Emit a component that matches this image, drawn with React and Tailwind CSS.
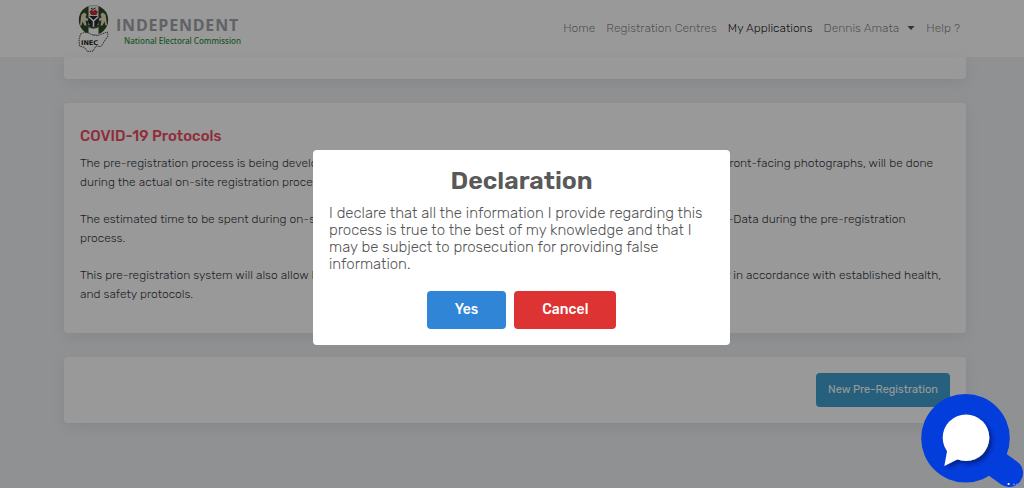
import React from "react";

function CoatOfArms() {
  return (
    <svg viewBox="0 0 32 48" className="h-12 w-8 shrink-0" aria-hidden="true">
      <circle cx="15.5" cy="15" r="14.7" fill="#2f4a22" />
      <path d="M10.5 1.2 Q15.5 -.6 20.5 1.2 V20 H10.5Z" fill="#e9e9e4" />
      <path d="M11.5 7 l2-2.5 2 1.5 2-1.5 2.5 2.5 -1.8 3 h-5z" fill="#c52a3c" />
      <path d="M13 3.2 l2 1.2 2.6-1.4" stroke="#333" strokeWidth="1" fill="none" />
      <path d="M10 11 h11 v5 q-1 5 -5.5 7 q-4.500-2 -5.500-7z" fill="#25292a" />
      <path d="M10.500 11.500 L15.500 16 L20.500 11.500 M15.500 16 V22" stroke="#fff" strokeWidth="1.600" fill="none" />
      <path d="M3.500 9.500 l3-2 2 2 -1 3 3 1.500 -1 2 -2-.5 1 5 h-2 l-2-4 -1 4 h-1.500 l1-8z" fill="#e6dcc6" />
      <path d="M27.500 9.500 l-3-2 -2 2 1 3 -3 1.500 1 2 2-.5 -1 5 h2 l2-4 1 4 h1.500 l-1-8z" fill="#e6dcc6" />
      <path d="M10.500 21.500 Q15.500 24 20.500 21.500 V29.500 H10.500Z" fill="#fff" />
      <path d="M9 20.500 Q15.500 25 22 20.500" stroke="#3e6133" strokeWidth="2" fill="none" />
      <path d="M2.500 29 Q8 26 12.500 29 Q18 32 22 29.500 L29.500 27 L30 31 L26.500 36 L23 41.500 L18 41 L15 46 L9.500 46.500 L6.500 42.500 L1.500 41 L1 35z" fill="#fff" stroke="#4c5348" strokeWidth="1" strokeDasharray="1.600 .7" strokeLinejoin="round" />
      <text x="3" y="39.500" fontSize="6.500" fontWeight="700" fontFamily="DejaVu Sans, sans-serif" fill="#222d20">INEC</text>
    </svg>
  );
}

function NavLink({ children, active }) {
  return (
    <a
      href="#"
      aria-current={active ? "page" : undefined}
      className={active ? "text-black/90" : "text-black/50"}
    >
      {children}
    </a>
  );
}

function Header() {
  return (
    <header className="bg-white">
      <div className="flex h-[57px] items-center justify-between pl-[78px] pr-16">
        <a href="#" className="flex items-center gap-1.5">
          <CoatOfArms />
          <span className="flex flex-col pt-1">
            <span className="font-['Open_Sans'] text-[16px] font-bold leading-5 tracking-wider text-[#a1a3a8]">
              INDEPENDENT
            </span>
            <span className="pl-2 font-['Noto_Sans'] text-[8px] font-medium leading-3 text-[#2d8f3a]">
              National Electoral Commission
            </span>
          </span>
        </a>
        <nav className="flex items-center gap-[11px] pb-0.5 text-[12px] leading-4 font-light">
          <NavLink>Home</NavLink>
          <NavLink>Registration Centres</NavLink>
          <NavLink active>My Applications</NavLink>
          <button type="button" className="flex items-center gap-2 text-black/50">
            Dennis Amata
            <svg viewBox="0 0 8 4" className="h-1 w-2" aria-hidden="true">
              <path d="M.5 0h7L4 4z" fill="#555" />
            </svg>
          </button>
          <NavLink>Help ?</NavLink>
        </nav>
      </div>
    </header>
  );
}

function Protocols() {
  return (
    <section className="rounded bg-white px-4 pb-[29px] pt-[23px] shadow-[0_4px_14px_rgba(120,135,120,0.14)]">
      <h2 className="text-[15px] font-medium leading-5 text-[#f04a62]">COVID-19 Protocols</h2>
      <div className="mt-2 flex flex-col gap-[18px] text-[12px] font-light leading-[19px] text-[#33373b]">
        <p>
          The pre-registration process is being developed to reduce the time spent at centres. Biometric capture fingerprints and front-facing photographs, will be done
          <br />
          during the actual on-site registration process.
        </p>
        <p>
          The estimated time to be spent during on-site registration will be decreased for applicants who have submitted their Bio-Data during the pre-registration
          <br />
          process.
        </p>
        <p>
          This pre-registration system will also allow INEC to schedule appointments and manage the crowds in an orderly manner in accordance with established health,
          <br />
          and safety protocols.
        </p>
      </div>
    </section>
  );
}

function Declaration() {
  return (
    <div className="fixed inset-0 flex items-center justify-center bg-black/40 pl-16 pr-[45px] pt-[7px]">
      <div
        role="dialog"
        aria-modal="true"
        aria-labelledby="declaration-title"
        className="w-full max-w-[417px] rounded bg-white px-4 pb-4 pt-[17px]"
      >
        <h1 id="declaration-title" className="text-center text-[25px] font-semibold leading-7 text-[#595959]">
          Declaration
        </h1>
        <p className="mt-2.5 text-[15px] font-light leading-[17px] text-[#545454]">
          I declare that all the information I provide regarding this process is true to the best of my knowledge and
          that I may be subject to prosecution for providing false information.
        </p>
        <div className="mt-[18px] flex justify-center gap-2">
          <button type="button" className="rounded bg-[#3085d6] px-7 py-[9px] text-[14px] font-medium leading-5 text-white">
            Yes
          </button>
          <button type="button" className="rounded bg-[#dd3333] px-7 py-[9px] text-[14px] font-medium leading-5 text-white">
            Cancel
          </button>
        </div>
      </div>
    </div>
  );
}

function ChatLauncher() {
  return (
    <button type="button" aria-label="Open chat" className="fixed bottom-0 right-0 h-[96px] w-[104px]">
      <svg viewBox="0 0 104 96" className="h-full w-full" aria-hidden="true">
        <defs>
          <filter id="bubble-shadow" x="-30%" y="-30%" width="170%" height="170%">
            <feDropShadow dx="3" dy="3" stdDeviation="2" floodColor="#001a70" floodOpacity=".75" />
          </filter>
        </defs>
        <path d="M60 60 L89 81" stroke="#033edc" strokeWidth="28" strokeLinecap="round" />
        <circle cx="45.500" cy="46.300" r="44.300" fill="#033edc" />
        <g filter="url(#bubble-shadow)" fill="#fff">
          <circle cx="46" cy="45.700" r="23.300" />
          <path d="M27.500 57 L24.300 74 L40 66z" />
        </g>
        <circle cx="88.600" cy="92" r="1.100" fill="#fff" />
        <path d="M93 92.500h9" stroke="#5d86f5" strokeWidth="1.500" strokeDasharray="2 1" />
      </svg>
    </button>
  );
}

export default function App() {
  return (
    <div className="min-h-screen bg-[#eff2f5] font-[Rubik,Roboto,sans-serif]">
      <Header />
      <main className="flex flex-col gap-6 pl-16 pr-[58px]">
        <div className="h-[22px] rounded-b bg-white shadow-[0_4px_14px_rgba(120,135,120,0.14)]" />
        <Protocols />
        <section className="flex justify-end rounded bg-white p-4 shadow-[0_4px_14px_rgba(120,135,120,0.14)]">
          <button type="button" className="rounded-sm bg-[#41a0cf] px-3 py-[9px] text-[11px] leading-4 text-white">
            New Pre-Registration
          </button>
        </section>
      </main>
      <Declaration />
      <ChatLauncher />
    </div>
  );
}
